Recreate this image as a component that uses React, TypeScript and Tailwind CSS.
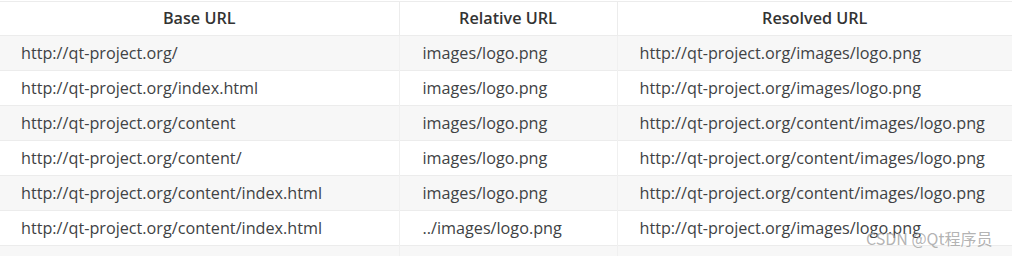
const rows = [
  ['http://qt-project.org/', 'images/logo.png', 'http://qt-project.org/images/logo.png'],
  ['http://qt-project.org/index.html', 'images/logo.png', 'http://qt-project.org/images/logo.png'],
  ['http://qt-project.org/content', 'images/logo.png', 'http://qt-project.org/content/images/logo.png'],
  ['http://qt-project.org/content/', 'images/logo.png', 'http://qt-project.org/content/images/logo.png'],
  ['http://qt-project.org/content/index.html', 'images/logo.png', 'http://qt-project.org/content/images/logo.png'],
  ['http://qt-project.org/content/index.html', '../images/logo.png', 'http://qt-project.org/images/logo.png'],
  ['', '', ''],
];

export default function App() {
  return (
    <div className="relative h-[256px] w-[1012px] overflow-hidden bg-white pt-px font-['Open_Sans',sans-serif] text-[16.2px] text-[#404244]">
      <table className="w-full table-fixed border-collapse">
        <colgroup>
          <col className="w-[399px]" />
          <col className="w-[218px]" />
          <col />
        </colgroup>
        <thead>
          <tr className="h-[34px] border-t border-[#ececec]">
            <th className="border-r border-[#ececec] text-center font-semibold text-[#333333]">Base URL</th>
            <th className="border-r border-[#ececec] text-center font-semibold text-[#333333]">Relative URL</th>
            <th className="text-center font-semibold text-[#333333]">Resolved URL</th>
          </tr>
        </thead>
        <tbody>
          {rows.map((r, i) => (
            <tr key={i} className={`h-[35px] border-t border-[#ececec] ${i % 2 === 0 ? 'bg-[#f7f7f7]' : 'bg-white'}`}>
              <td className="border-r border-[#f0f0f0] pl-[21px] text-left font-normal">{r[0]}</td>
              <td className="border-r border-[#f0f0f0] pl-[23px] text-left font-normal">{r[1]}</td>
              <td className="pl-[22px] text-left font-normal">{r[2]}</td>
            </tr>
          ))}
        </tbody>
      </table>
      <div className="absolute left-[866px] top-[227px] font-['Noto_Sans_CJK_SC',sans-serif] text-[16px] leading-[22px] text-[#a0a0a0]/80">
        CSDN @Qt程序员
      </div>
    </div>
  );
}
